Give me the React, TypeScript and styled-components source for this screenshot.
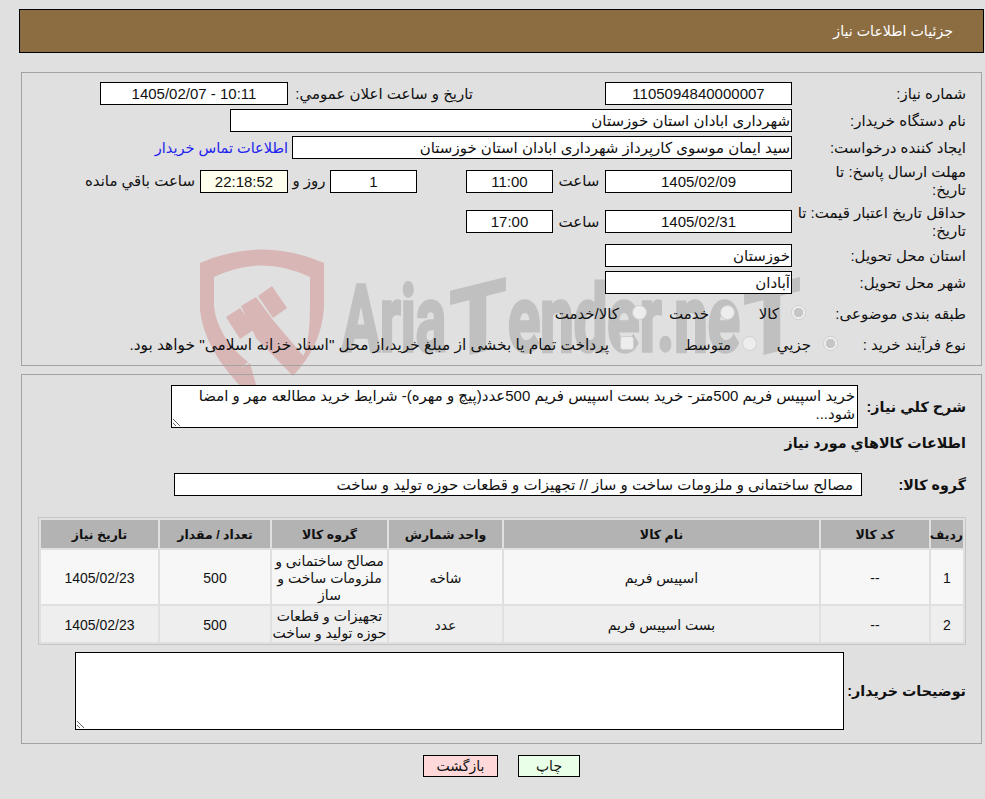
import styled, { createGlobalStyle } from "styled-components";

interface NeedItem {
  row: number;
  code: string;
  name: string;
  unit: string;
  group: string[];
  amount: string;
  date: string;
  height: number;
}

const items: NeedItem[] = [
  {
    row: 1,
    code: "--",
    name: "اسپیس فریم",
    unit: "شاخه",
    group: ["مصالح ساختمانی و", "ملزومات ساخت و", "ساز"],
    amount: "500",
    date: "1405/02/23",
    height: 54,
  },
  {
    row: 2,
    code: "--",
    name: "بست اسپیس فریم",
    unit: "عدد",
    group: ["تجهیزات و قطعات", "حوزه تولید و ساخت"],
    amount: "500",
    date: "1405/02/23",
    height: 36,
  },
];

const columns = [
  { title: "ردیف", width: 32 },
  { title: "کد کالا", width: 108 },
  { title: "نام کالا", width: 315 },
  { title: "واحد شمارش", width: 113 },
  { title: "گروه کالا", width: 115 },
  { title: "تعداد / مقدار", width: 110 },
  { title: "تاریخ نیاز", width: 117 },
];

const GlobalStyle = createGlobalStyle`
  html, body {
    margin: 0;
    padding: 0;
    background: #e0e0e0;
    overflow: hidden;
  }
  body {
    font-family: "Liberation Sans", "DejaVu Sans", sans-serif;
    font-size: 15px;
    color: #111;
  }
`;

const Page = styled.div`
  position: relative;
  width: 985px;
  height: 799px;
  box-sizing: border-box;
  padding: 9px 1px 0 19px;
  direction: rtl;
`;

const Watermark = styled.svg`
  position: absolute;
  left: 0;
  top: 0;
  pointer-events: none;
`;

const Content = styled.div`
  position: relative;
  z-index: 1;
`;

const Header = styled.div`
  height: 42px;
  border: 1px solid #000;
  background: #8c6d42;
  color: #fff;
  font-size: 14.2px;
  display: flex;
  align-items: center;
  padding-right: 30px;
`;

const Panel = styled.div<{ $top: number }>`
  margin: ${(p) => p.$top}px 2px 0;
  border: 1px solid #a3a3a3;
`;

const FormGrid = styled.div`
  display: grid;
  grid-template-rows: 23px 23px 23px 36px 37px 23px 23px 28px 26px;
  row-gap: 4px;
  padding: 9px 15px 9px 0;
`;

const Row = styled.div`
  display: flex;
  align-items: center;
`;

const Label = styled.div<{ $w: number; $bold?: boolean; $low?: boolean }>`
  flex: none;
  width: ${(p) => p.$w}px;
  padding-top: ${(p) => (p.$low ? 3 : 0)}px;
  line-height: 18px;
  white-space: nowrap;
  font-size: ${(p) => (p.$bold ? 14.3 : 15)}px;
  font-weight: ${(p) => (p.$bold ? 700 : 400)};
`;

const Cell = styled.div<{ $w?: number; $mr?: number; $center?: boolean; $low?: boolean }>`
  flex: none;
  ${(p) => (p.$w ? `width: ${p.$w}px;` : "")}
  margin-right: ${(p) => p.$mr ?? 0}px;
  padding-top: ${(p) => (p.$low ? 3 : 0)}px;
  text-align: ${(p) => (p.$center ? "center" : "right")};
  white-space: nowrap;
`;

const PaymentNote = styled(Cell)`
  font-size: 15.4px;
`;

const Field = styled.input<{
  $w: number;
  $mr?: number;
  $center?: boolean;
  $pad?: number;
  $bg?: string;
}>`
  flex: none;
  box-sizing: border-box;
  width: ${(p) => p.$w}px;
  height: 23px;
  margin: 0 ${(p) => p.$mr ?? 0}px 0 0;
  padding: 0 ${(p) => p.$pad ?? 1}px 0 1px;
  border: 1px solid #000;
  border-radius: 0;
  outline: none;
  background: ${(p) => p.$bg ?? "#fff"};
  color: #111;
  font: inherit;
  direction: rtl;
  text-align: ${(p) => (p.$center ? "center" : "right")};
`;

const ContactLink = styled.a`
  margin-right: 4px;
  color: #2222ee;
  font-size: 14.5px;
  text-decoration: none;
  white-space: nowrap;
`;

const Radio = styled.span<{ $checked?: boolean; $mr?: number }>`
  flex: none;
  box-sizing: border-box;
  width: 15px;
  height: 15px;
  margin-right: ${(p) => p.$mr ?? 0}px;
  border-radius: 50%;
  border: 1px solid #cfcfcf;
  background: ${(p) =>
    p.$checked
      ? "radial-gradient(circle, #c6c6c6 0 4.5px, #efefef 5px)"
      : "#ededed"};
`;

const CheckBox = styled.span<{ $mr?: number }>`
  flex: none;
  box-sizing: border-box;
  width: 14px;
  height: 14px;
  margin-right: ${(p) => p.$mr ?? 0}px;
  border-radius: 3px;
  border: 1px solid #cfcfcf;
  background: #ededed;
`;

const DetailsPanel = styled(Panel)`
  display: flex;
  flex-direction: column;
  padding: 10px 15px 13px 0;
`;

const Area = styled.textarea<{ $w: number; $h: number }>`
  flex: none;
  box-sizing: border-box;
  width: ${(p) => p.$w}px;
  height: ${(p) => p.$h}px;
  margin: 0;
  padding: 1px 2px;
  border: 1px solid #000;
  border-radius: 0;
  outline: none;
  background: #fff;
  color: #111;
  font: inherit;
  line-height: 18px;
  direction: rtl;
  resize: both;
`;

const Heading = styled.div`
  height: 18px;
  margin-top: 6px;
  line-height: 18px;
  font-size: 14.3px;
  font-weight: 700;
`;

const GroupRow = styled(Row)`
  margin-top: 21px;
`;

const NeedTable = styled.table`
  box-sizing: border-box;
  width: 928px;
  margin-top: 21px;
  table-layout: fixed;
  border-collapse: separate;
  border-spacing: 2px;
  border: 1px solid #c6c6c6;
  font-size: 14px;
`;

const HeadCell = styled.th`
  height: 28px;
  padding: 0;
  background: #b3b3b3;
  font-size: 12.5px;
  font-weight: 700;
  text-align: center;
  white-space: nowrap;
`;

const BodyRow = styled.tr<{ $odd: boolean }>`
  background: ${(p) => (p.$odd ? "#f7f7f7" : "#eeeeee")};
`;

const BodyCell = styled.td`
  padding: 2px 0 0;
  text-align: center;
  line-height: 17px;
  white-space: nowrap;
`;

const BuyerRow = styled(Row)`
  margin-top: 7px;
`;

const Buttons = styled.div`
  display: flex;
  justify-content: center;
  gap: 20px;
  margin-top: 11px;
`;

const ActionButton = styled.button<{ $w: number; $bg: string }>`
  box-sizing: border-box;
  width: ${(p) => p.$w}px;
  height: 22px;
  padding: 0;
  border: 1px solid #000;
  border-radius: 0;
  background: ${(p) => p.$bg};
  color: #111;
  font: inherit;
  font-size: 14px;
  cursor: pointer;
`;

const Brand = () => (
  <Watermark width={985} height={400} viewBox="0 0 985 400">
    <path
      fill="#d9b6b6"
      fillRule="evenodd"
      d="M200 263 Q262 236 324 263 L324 307 Q322 345 293 376 L305 352 Q310 335 310 307 L310 277 Q262 254 214 277 L214 307 Q218 338 248 362 L241 368 L250 363 L258 392 L246 392 Q204 350 200 310 Z"
    />
    <path fill="#d9b6b6" d="M226 317 L240 308 L255 329 L240 339 Z" />
    <path fill="#d9b6b6" d="M241 306 L256 297 L273 320 L305 358 L293 376 L256 338 Z" />
    <path fill="#d9b6b6" d="M258 296 L272 286 L287 308 L273 318 Z" />
    <g
      fill="#c0c0c0"
      stroke="#c0c0c0"
      strokeWidth={3.5}
      fontFamily="Roboto, 'Liberation Sans', sans-serif"
      fontWeight={700}
      fontSize={92}
    >
      <text x={342} y={351} textLength={104} lengthAdjust="spacingAndGlyphs" direction="ltr">
        Aria
      </text>
      <text
        x={450}
        y={351}
        textLength={56}
        lengthAdjust="spacingAndGlyphs"
        direction="ltr"
        transform="translate(478 0) skewY(-14) translate(-478 0)"
      >
        T
      </text>
      <text x={508} y={351} textLength={232} lengthAdjust="spacingAndGlyphs" direction="ltr">
        ender.ne
      </text>
      <text
        x={744}
        y={351}
        textLength={56}
        lengthAdjust="spacingAndGlyphs"
        direction="ltr"
        transform="translate(772 0) skewY(-14) translate(-772 0)"
      >
        T
      </text>
    </g>
  </Watermark>
);

export default function App() {
  return (
    <Page>
      <GlobalStyle />
      <Brand />
      <Content>
        <Header>جزئیات اطلاعات نیاز</Header>

        <Panel $top={19}>
          <FormGrid>
            <Row>
              <Label $w={174}>شماره نیاز:</Label>
              <Field $w={187} $center readOnly value="1105094840000007" />
              <Cell $w={132} />
              <Cell $w={185}>تاریخ و ساعت اعلان عمومي:</Cell>
              <Field $w={188} $center readOnly value="10:11 - 1405/02/07" />
            </Row>
            <Row>
              <Label $w={174}>نام دستگاه خریدار:</Label>
              <Field $w={562} readOnly value="شهرداری ابادان استان خوزستان" />
            </Row>
            <Row>
              <Label $w={174}>ایجاد کننده درخواست:</Label>
              <Field
                $w={500}
                readOnly
                value="سید ایمان موسوی کارپرداز شهرداری ابادان استان خوزستان"
              />
              <ContactLink href="#">اطلاعات تماس خریدار</ContactLink>
            </Row>
            <Row>
              <Label $w={174}>
                مهلت ارسال پاسخ: تا
                <br />
                تاریخ:
              </Label>
              <Field $w={187} $center readOnly value="1405/02/09" />
              <Cell $w={52} $center>
                ساعت
              </Cell>
              <Field $w={87} $center readOnly value="11:00" />
              <Field $w={87} $mr={49} $center readOnly value="1" />
              <Cell $w={42} $center>
                روز و
              </Cell>
              <Field $w={88} $center $bg="#ffffee" readOnly value="22:18:52" />
              <Cell $mr={5}>ساعت باقي مانده</Cell>
            </Row>
            <Row>
              <Label $w={174}>
                حداقل تاریخ اعتبار قیمت: تا
                <br />
                تاریخ:
              </Label>
              <Field $w={187} $center readOnly value="1405/02/31" />
              <Cell $w={52} $center>
                ساعت
              </Cell>
              <Field $w={87} $center readOnly value="17:00" />
            </Row>
            <Row>
              <Label $w={174}>استان محل تحویل:</Label>
              <Field $w={187} readOnly value="خوزستان" />
            </Row>
            <Row>
              <Label $w={174}>شهر محل تحویل:</Label>
              <Field $w={187} readOnly value="آبادان" />
            </Row>
            <Row>
              <Label $w={160} $low>
                طبقه بندی موضوعی:
              </Label>
              <Radio $checked />
              <Cell $w={44} $mr={12} $low>
                کالا
              </Cell>
              <Radio />
              <Cell $w={62} $mr={11} $low>
                خدمت
              </Cell>
              <Radio />
              <Cell $mr={13} $low>
                کالا/خدمت
              </Cell>
            </Row>
            <Row>
              <Label $w={128} $low>
                نوع فرآیند خرید :
              </Label>
              <Radio $checked />
              <Cell $w={54} $mr={12} $low>
                جزيي
              </Cell>
              <Radio />
              <Cell $w={97} $mr={11} $low>
                متوسط
              </Cell>
              <CheckBox />
              <PaymentNote $mr={11} $low>
                پرداخت تمام یا بخشی از مبلغ خرید،از محل "اسناد خزانه اسلامی" خواهد بود.
              </PaymentNote>
            </Row>
          </FormGrid>
        </Panel>

        <DetailsPanel $top={8}>
          <Row>
            <Label $w={108} $bold>
              شرح کلي نياز:
            </Label>
            <Area
              $w={687}
              $h={43}
              readOnly
              value="خرید اسپیس فریم 500متر- خرید بست اسپیس فریم 500عدد(پیچ و مهره)- شرایط خرید مطالعه مهر و امضا شود..."
            />
          </Row>
          <Heading>اطلاعات کالاهاي مورد نياز</Heading>
          <GroupRow>
            <Label $w={104} $bold>
              گروه کالا:
            </Label>
            <Field
              $w={688}
              $pad={8}
              readOnly
              value="مصالح ساختمانی و ملزومات ساخت و ساز // تجهیزات و قطعات حوزه تولید و ساخت"
            />
          </GroupRow>
          <NeedTable>
            <colgroup>
              {columns.map((column) => (
                <col key={column.title} width={column.width} />
              ))}
            </colgroup>
            <thead>
              <tr>
                {columns.map((column) => (
                  <HeadCell key={column.title}>{column.title}</HeadCell>
                ))}
              </tr>
            </thead>
            <tbody>
              {items.map((item) => (
                <BodyRow key={item.row} $odd={item.row % 2 === 1} style={{ height: item.height }}>
                  <BodyCell>{item.row}</BodyCell>
                  <BodyCell>{item.code}</BodyCell>
                  <BodyCell>{item.name}</BodyCell>
                  <BodyCell>{item.unit}</BodyCell>
                  <BodyCell>
                    {item.group.map((line) => (
                      <div key={line}>{line}</div>
                    ))}
                  </BodyCell>
                  <BodyCell>{item.amount}</BodyCell>
                  <BodyCell>{item.date}</BodyCell>
                </BodyRow>
              ))}
            </tbody>
          </NeedTable>
          <BuyerRow>
            <Label $w={122} $bold>
              توضیحات خریدار:
            </Label>
            <Area $w={769} $h={78} readOnly value="" />
          </BuyerRow>
        </DetailsPanel>

        <Buttons>
          <ActionButton $w={62} $bg="#eaffe8">
            چاپ
          </ActionButton>
          <ActionButton $w={75} $bg="#ffd9d9">
            بازگشت
          </ActionButton>
        </Buttons>
      </Content>
    </Page>
  );
}
